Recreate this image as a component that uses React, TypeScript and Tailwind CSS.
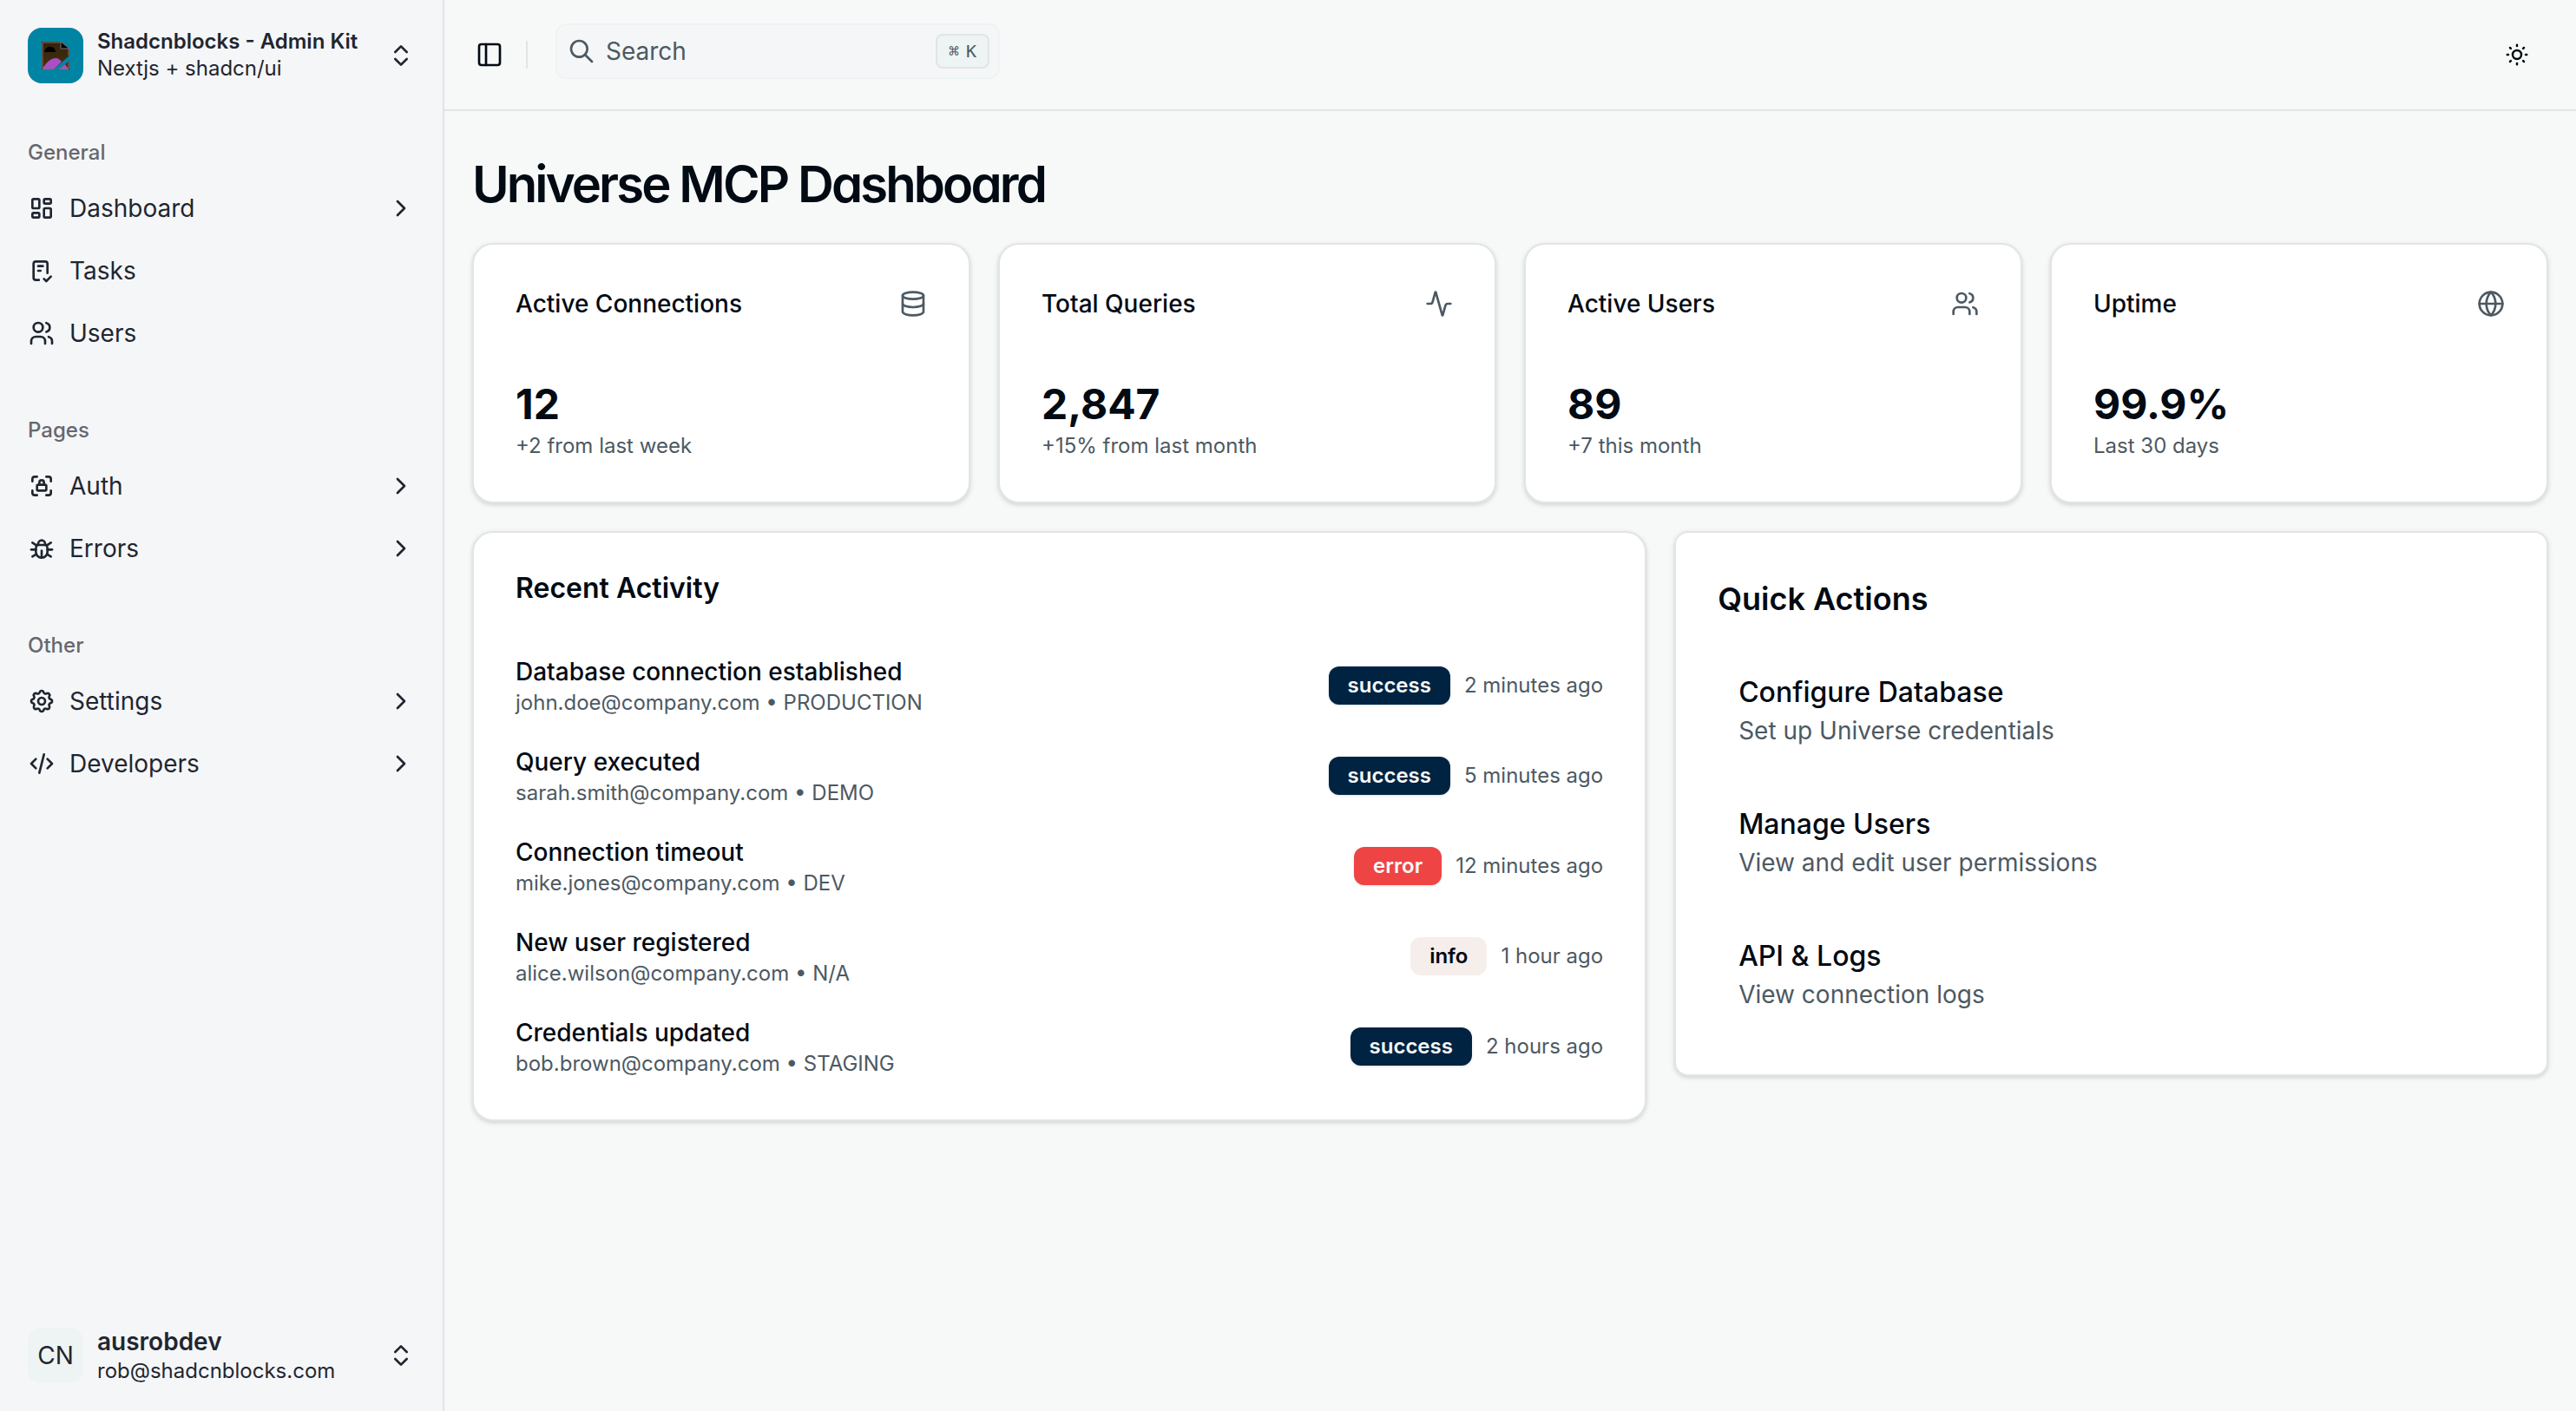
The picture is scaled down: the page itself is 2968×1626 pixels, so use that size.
import React from "react";
import { ChevronRight, ChevronsUpDown, PanelLeft, Database, Activity, Users, Globe } from "lucide-react";
import { TbLayoutDashboard, TbChecklist, TbUsers, TbLockAccess, TbBug, TbSettings, TbCode, TbSearch, TbSun } from "react-icons/tb";

const groups = [
  {
    label: "General",
    items: [
      { name: "Dashboard", icon: TbLayoutDashboard, more: true },
      { name: "Tasks", icon: TbChecklist, more: false },
      { name: "Users", icon: TbUsers, more: false },
    ],
  },
  {
    label: "Pages",
    items: [
      { name: "Auth", icon: TbLockAccess, more: true },
      { name: "Errors", icon: TbBug, more: true },
    ],
  },
  {
    label: "Other",
    items: [
      { name: "Settings", icon: TbSettings, more: true },
      { name: "Developers", icon: TbCode, more: true },
    ],
  },
];

const stats = [
  { title: "Active Connections", value: "12", note: "+2 from last week", icon: Database },
  { title: "Total Queries", value: "2,847", note: "+15% from last month", icon: Activity },
  { title: "Active Users", value: "89", note: "+7 this month", icon: Users },
  { title: "Uptime", value: "99.9%", note: "Last 30 days", icon: Globe },
];

const badgeStyles: Record<string, string> = {
  success: "bg-[#002341] text-[#f7f9f8] shadow-sm",
  error: "bg-[#ef4444] text-[#f7f9f8] shadow-sm",
  info: "bg-[#f5eeeb] text-[#020a13]",
};

const activity = [
  { title: "Database connection established", user: "john.doe@company.com", env: "PRODUCTION", status: "success", time: "2 minutes ago" },
  { title: "Query executed", user: "sarah.smith@company.com", env: "DEMO", status: "success", time: "5 minutes ago" },
  { title: "Connection timeout", user: "mike.jones@company.com", env: "DEV", status: "error", time: "12 minutes ago" },
  { title: "New user registered", user: "alice.wilson@company.com", env: "N/A", status: "info", time: "1 hour ago" },
  { title: "Credentials updated", user: "bob.brown@company.com", env: "STAGING", status: "success", time: "2 hours ago" },
];

const actions = [
  { title: "Configure Database", note: "Set up Universe credentials" },
  { title: "Manage Users", note: "View and edit user permissions" },
  { title: "API & Logs", note: "View connection logs" },
];

const card = "border-2 border-[#e1e5e4] bg-white shadow-[0_2px_6px_rgba(0,0,0,0.1),0_2px_4px_rgba(0,0,0,0.06)]";

function TeamLogo() {
  return (
    <svg viewBox="0 0 32 32" className="size-8" aria-hidden="true">
      <defs>
        <linearGradient id="sky" x1="0" y1="0" x2="0" y2="1">
          <stop offset="0" stopColor="#33220a" />
          <stop offset="1" stopColor="#463010" />
        </linearGradient>
      </defs>
      <path d="M0 0H22L32 8V16L14 32H0Z" fill="url(#sky)" />
      <path d="M3 12C4 8 7 5 10 6C14 6 16 9 16 12Z" fill="#000" />
      <path d="M1 31C6 23 11 19 16 19C19 19 21 21 23 23L14 32H1Z" fill="#a94fc8" />
      <path d="M20 32L32 22V32Z" fill="#463010" />
      <path d="M20 32L27 26L31 32Z" fill="#a94fc8" />
      <path d="M22 0V8H32Z" fill="#000" stroke="#777" />
      <path d="M22 1H1V31H14M31 23V31H20M31 8V16" fill="none" stroke="#777" />
    </svg>
  );
}

function Sidebar() {
  return (
    <aside className="flex w-128 shrink-0 flex-col border-r-2 border-[#e1e4e6] bg-[#f5f6f8] text-[#1f2630]">
      <button type="button" className="flex h-32 items-center gap-4 pr-8 pl-8 text-left">
        <span className="flex size-16 shrink-0 items-center justify-center rounded-2xl bg-[#0084a4]">
          <TeamLogo />
        </span>
        <span className="flex-1">
          <span className="block text-[24px] leading-[30px] font-semibold">Shadcnblocks - Admin Kit</span>
          <span className="block text-[24px] leading-[32px]">Nextjs + shadcn/ui</span>
        </span>
        <ChevronsUpDown className="size-8" />
      </button>
      <nav className="flex flex-1 flex-col gap-8 pt-2">
        {groups.map((g) => (
          <section key={g.label} className="px-4 py-2">
            <h2 className="flex h-16 items-center px-4 text-[24px] font-medium text-[#65686f]">{g.label}</h2>
            <ul className="flex flex-col gap-2">
              {g.items.map((item) => (
                <li key={item.name}>
                  <a href="#" className="flex h-16 items-center gap-4 px-4 text-[28px]">
                    <item.icon className="size-8" />
                    <span className="flex-1">{item.name}</span>
                    {item.more && <ChevronRight className="size-8" />}
                  </a>
                </li>
              ))}
            </ul>
          </section>
        ))}
      </nav>
      <button type="button" className="flex h-32 items-center gap-4 px-8 text-left">
        <span className="flex size-16 shrink-0 items-center justify-center rounded-2xl bg-[#eef3f3] text-[28px]">CN</span>
        <span className="flex-1">
          <span className="block text-[28px] leading-[35px] font-semibold">ausrobdev</span>
          <span className="block text-[24px] leading-[32px]">rob@shadcnblocks.com</span>
        </span>
        <ChevronsUpDown className="size-8" />
      </button>
    </aside>
  );
}

function Header() {
  return (
    <header className="flex h-32 items-center border-b-2 border-[#e1e5e4] px-8">
      <button type="button" aria-label="Toggle sidebar" className="-ml-2 flex size-14 items-center justify-center">
        <PanelLeft className="size-8" />
      </button>
      <span className="mr-8 ml-[14px] h-8 w-[2px] bg-[#e1e5e4]" />
      <button
        type="button"
        className="mb-2 flex h-16 w-128 items-center gap-3 rounded-xl border-2 border-[#eef3f3] bg-[#f5f6f8] pr-[10px] pl-3 text-left text-[28px] text-[#4d5962]"
      >
        <TbSearch className="size-8" />
        <span className="flex-1">Search</span>
        <kbd className="flex h-10 min-w-[62px] items-center justify-center gap-2 rounded-lg border-2 border-[#e1e5e4] bg-[#eef3f3] font-['DejaVu_Sans_Mono',monospace] text-[20px] font-medium">
          <span>⌘</span>K
        </kbd>
      </button>
      <button type="button" aria-label="Toggle theme" className="ml-auto flex size-18 items-center justify-center">
        <TbSun className="size-[30px]" />
      </button>
    </header>
  );
}

export default function App() {
  return (
    <div className="flex min-h-screen bg-[#f7f9f8] font-['Inter',sans-serif] text-[#020a13]">
      <Sidebar />
      <div className="min-w-0 flex-1">
        <Header />
        <main className="flex flex-col gap-8 px-8 pt-12">
          <h1 className="text-[58px] leading-[72px] font-semibold tracking-tighter [font-feature-settings:'cv11']">Universe MCP Dashboard</h1>
          <div className="grid grid-cols-4 gap-8">
            {stats.map((s) => (
              <section key={s.title} className={`rounded-3xl p-12 ${card}`}>
                <div className="flex items-center justify-between">
                  <h2 className="text-[28px] leading-[40px] font-medium">{s.title}</h2>
                  <s.icon className="size-8 text-[#4d5962]" />
                </div>
                <p className="mt-16 text-[48px] leading-[64px] font-bold">{s.value}</p>
                <p className="text-[24px] leading-[32px] text-[#4d5962]">{s.note}</p>
              </section>
            ))}
          </div>
          <div className="grid grid-cols-7 items-start gap-8">
            <section className={`col-span-4 rounded-3xl p-12 ${card}`}>
              <h2 className="text-[32px] leading-[32px] font-semibold">Recent Activity</h2>
              <ul className="mt-15 flex flex-col gap-8">
                {activity.map((a) => (
                  <li key={a.title} className="flex items-center justify-between">
                    <div>
                      <p className="text-[28px] leading-[40px] font-medium">{a.title}</p>
                      <p className="text-[24px] leading-[32px] text-[#4d5962]">{a.user} • {a.env}</p>
                    </div>
                    <div className="flex items-center gap-4">
                      <span className={`rounded-xl px-[22px] py-[6px] text-[24px] leading-[32px] font-semibold ${badgeStyles[a.status]}`}>{a.status}</span>
                      <span className="text-[24px] leading-[32px] text-[#4d5962]">{a.time}</span>
                    </div>
                  </li>
                ))}
              </ul>
            </section>
            <section className={`col-span-3 rounded-2xl p-12 ${card}`}>
              <h2 className="text-[36px] leading-[56px] font-semibold">Quick Actions</h2>
              <div className="mt-8 flex flex-col gap-4">
                {actions.map((a) => (
                  <button key={a.title} type="button" className="block rounded-xl p-6 text-left">
                    <span className="block text-[32px] leading-[48px] font-medium">{a.title}</span>
                    <span className="block text-[28px] leading-[40px] text-[#4d5962]">{a.note}</span>
                  </button>
                ))}
              </div>
            </section>
          </div>
        </main>
      </div>
    </div>
  );
}
